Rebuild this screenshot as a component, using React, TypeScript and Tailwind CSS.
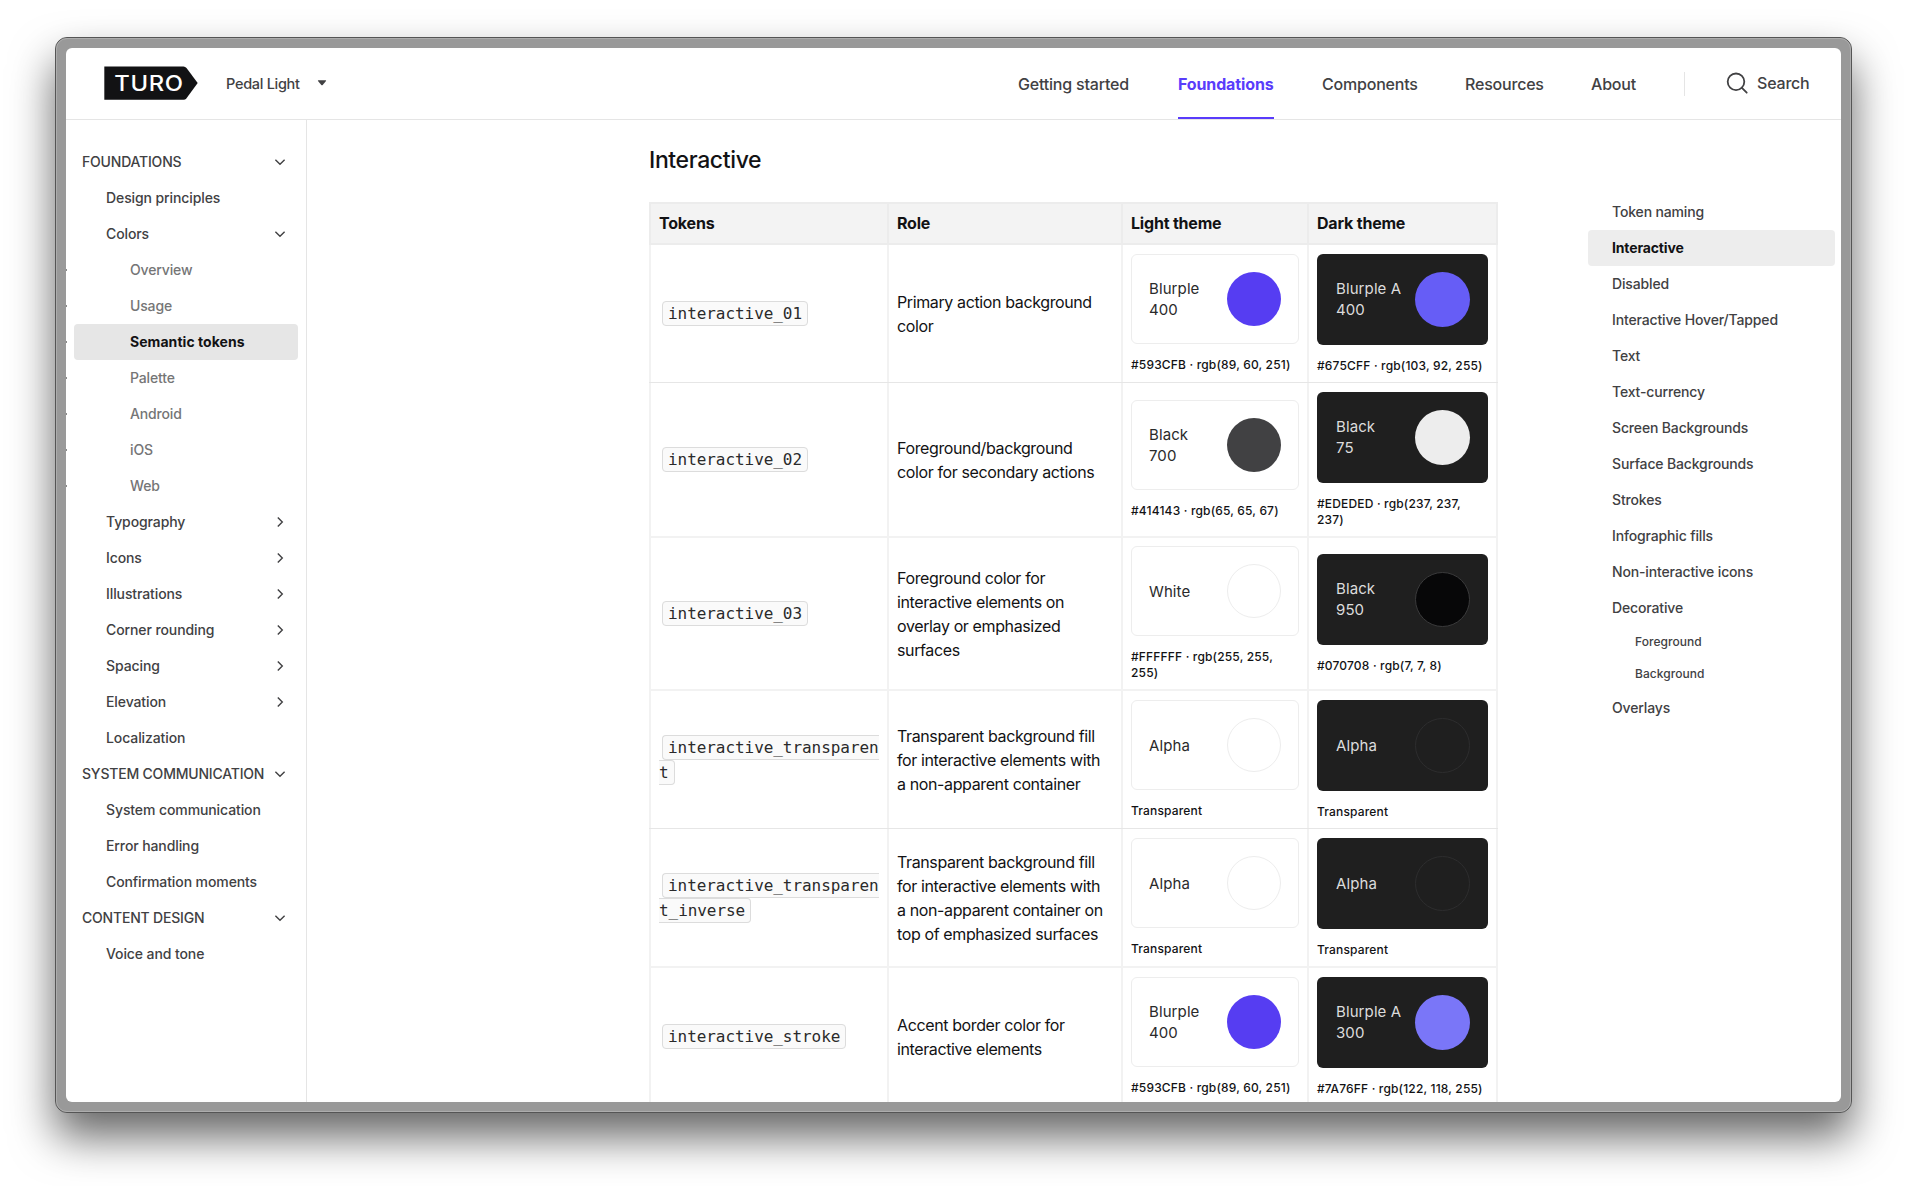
import clsx from "clsx";
import React from "react";

type NavEntry = {
  label: string;
  level: 0 | 1 | 2;
  chevron?: "down" | "right";
  active?: boolean;
};

const sidebar: NavEntry[] = [
  { label: "FOUNDATIONS", level: 0, chevron: "down" },
  { label: "Design principles", level: 1 },
  { label: "Colors", level: 1, chevron: "down" },
  { label: "Overview", level: 2 },
  { label: "Usage", level: 2 },
  { label: "Semantic tokens", level: 2, active: true },
  { label: "Palette", level: 2 },
  { label: "Android", level: 2 },
  { label: "iOS", level: 2 },
  { label: "Web", level: 2 },
  { label: "Typography", level: 1, chevron: "right" },
  { label: "Icons", level: 1, chevron: "right" },
  { label: "Illustrations", level: 1, chevron: "right" },
  { label: "Corner rounding", level: 1, chevron: "right" },
  { label: "Spacing", level: 1, chevron: "right" },
  { label: "Elevation", level: 1, chevron: "right" },
  { label: "Localization", level: 1 },
  { label: "SYSTEM COMMUNICATION", level: 0, chevron: "down" },
  { label: "System communication", level: 1 },
  { label: "Error handling", level: 1 },
  { label: "Confirmation moments", level: 1 },
  { label: "CONTENT DESIGN", level: 0, chevron: "down" },
  { label: "Voice and tone", level: 1 },
];

const topNav = [
  { label: "Getting started", width: "w-[112px]" },
  { label: "Foundations", width: "w-[96px]", active: true },
  { label: "Components", width: "w-[95px]" },
  { label: "Resources", width: "w-[78px]" },
  { label: "About", width: "w-[45px]" },
];

const toc = [
  { label: "Token naming" },
  { label: "Interactive", active: true },
  { label: "Disabled" },
  { label: "Interactive Hover/Tapped" },
  { label: "Text" },
  { label: "Text-currency" },
  { label: "Screen Backgrounds" },
  { label: "Surface Backgrounds" },
  { label: "Strokes" },
  { label: "Infographic fills" },
  { label: "Non-interactive icons" },
  { label: "Decorative" },
  { label: "Foreground", nested: true },
  { label: "Background", nested: true },
  { label: "Overlays" },
];

type SwatchData = { name: string[]; circle: string; caption: string };

const rows: {
  token: string;
  role: string[];
  light: SwatchData;
  dark: SwatchData;
  size: string;
}[] = [
  {
    token: "interactive_01",
    role: ["Primary action background", "color"],
    light: { name: ["Blurple", "400"], circle: "bg-[#563df2]", caption: "#593CFB · rgb(89, 60, 251)" },
    dark: { name: ["Blurple A", "400"], circle: "bg-[#665df6]", caption: "#675CFF · rgb(103, 92, 255)" },
    size: "h-[138px] border-b border-[#e6e6e6]",
  },
  {
    token: "interactive_02",
    role: ["Foreground/background", "color for secondary actions"],
    light: { name: ["Black", "700"], circle: "bg-[#414143]", caption: "#414143 · rgb(65, 65, 67)" },
    dark: { name: ["Black", "75"], circle: "bg-[#ededed]", caption: "#EDEDED · rgb(237, 237, 237)" },
    size: "h-[155px] border-b-2 border-[#f2f2f2]",
  },
  {
    token: "interactive_03",
    role: ["Foreground color for", "interactive elements on", "overlay or emphasized", "surfaces"],
    light: { name: ["White"], circle: "bg-white border border-[#ededed]", caption: "#FFFFFF · rgb(255, 255, 255)" },
    dark: { name: ["Black", "950"], circle: "bg-[#070708] border border-[#3a3a3b]", caption: "#070708 · rgb(7, 7, 8)" },
    size: "h-[153px] border-b-2 border-[#f2f2f2]",
  },
  {
    token: "interactive_transparent",
    role: ["Transparent background fill", "for interactive elements with", "a non-apparent container"],
    light: { name: ["Alpha"], circle: "border border-[#ededed]", caption: "Transparent" },
    dark: { name: ["Alpha"], circle: "border border-[#2d2d2e]", caption: "Transparent" },
    size: "h-[138px] border-b border-[#e6e6e6]",
  },
  {
    token: "interactive_transparent_inverse",
    role: ["Transparent background fill", "for interactive elements with", "a non-apparent container on", "top of emphasized surfaces"],
    light: { name: ["Alpha"], circle: "border border-[#ededed]", caption: "Transparent" },
    dark: { name: ["Alpha"], circle: "border border-[#2d2d2e]", caption: "Transparent" },
    size: "h-[139px] border-b-2 border-[#f2f2f2]",
  },
  {
    token: "interactive_stroke",
    role: ["Accent border color for", "interactive elements"],
    light: { name: ["Blurple", "400"], circle: "bg-[#563df2]", caption: "#593CFB · rgb(89, 60, 251)" },
    dark: { name: ["Blurple A", "300"], circle: "bg-[#7a76f8]", caption: "#7A76FF · rgb(122, 118, 255)" },
    size: "h-[138px] border-b border-[#e6e6e6]",
  },
];

const gridCols = "grid grid-cols-[238px_234px_186px_191px]";

function Chevron({ dir }: { dir: "down" | "right" }) {
  return (
    <svg width="12" height="12" viewBox="0 0 12 12" fill="none" stroke="#414143" strokeWidth="1.4">
      {dir === "down" ? <path d="M1.4 3.7 6 8.2l4.6-4.5" /> : <path d="M3.8 1.4 8.3 6l-4.5 4.6" />}
    </svg>
  );
}

function Logo() {
  return (
    <svg width="94" height="34" viewBox="0 0 94 34" className="-mt-px">
      <path d="M.3.4H79.5q1.8 0 3 1.5L93.7 17 82.5 32.3q-1.2 1.5-3 1.5H.3z" fill="#121214" />
      <text
        x="10.2"
        y="24.7"
        fontFamily="Inter, sans-serif"
        fontSize="21"
        fontWeight="500"
        fill="#fff"
        letterSpacing="0.6"
        textLength="69.5"
        lengthAdjust="spacingAndGlyphs"
      >
        TURO
      </text>
    </svg>
  );
}

function Header() {
  return (
    <header className="flex h-[72px] shrink-0 items-center border-b border-[#e5e5e5] pl-[38px] text-[#414143]">
      <Logo />
      <div className="ml-7 w-[91px] whitespace-nowrap text-[14.5px] font-medium tracking-[-0.3px]">
        Pedal Light
      </div>
      <svg width="10" height="6" viewBox="0 0 10 6" className="-mt-px">
        <path d="M1.4.3h7.2q.8 0 .4.7L5.7 5q-.7.7-1.4 0L1 1Q.6.3 1.4.3z" fill="#414143" />
      </svg>

      <nav className="ml-[691px] flex h-full gap-12 text-base font-medium">
        {topNav.map((item) => (
          <a
            key={item.label}
            className={clsx(
              "flex h-full items-center whitespace-nowrap border-b-2 pt-0.5",
              item.width,
              item.active
                ? "border-[#593cfb] font-bold tracking-[-0.13px] text-[#593cfb]"
                : "border-transparent tracking-[-0.2px]"
            )}
          >
            {item.label}
          </a>
        ))}
      </nav>
      <div className="ml-12 h-6 w-px bg-[#e5e5e5]" />
      <svg width="22" height="22" viewBox="0 0 22 22" fill="none" stroke="#414143" strokeWidth="1.8" className="-mt-0.5 ml-[41px] shrink-0">
        <circle cx="10" cy="9.8" r="8.3" />
        <path d="m15.9 15.8 4.8 4.9" strokeLinecap="round" />
      </svg>
      <span className="-mt-0.5 ml-[9px] whitespace-nowrap text-base font-medium tracking-[-0.2px]">Search</span>
    </header>
  );
}

function Sidebar() {
  return (
    <aside className="w-[241px] shrink-0 border-r border-[#e5e5e5] pt-6">
      {sidebar.map((item) => (
        <div key={item.label} className="flex items-center">
          <span className={clsx("h-0.5 w-px", item.level === 2 && "bg-[#8a8a8a]")} />
          <div
            className={clsx(
              "ml-[7px] flex h-9 w-56 items-center justify-between whitespace-nowrap rounded-sm pr-3 text-sm",
              item.level === 0 && "pl-2 tracking-[-0.2px] text-[#414143]",
              item.level === 1 && "pl-8 tracking-[-0.1px] text-[#414143]",
              item.level === 2 && "pl-14",
              item.active
                ? "bg-[#e6e6e6] font-bold tracking-[0.05px] text-[#121214]"
                : "font-medium",
              item.level === 2 && !item.active && "tracking-[-0.15px] text-[#757576]"
            )}
          >
            {item.label}
            {item.chevron && <Chevron dir={item.chevron} />}
          </div>
        </div>
      ))}
    </aside>
  );
}

function Swatch({ data, dark }: { data: SwatchData; dark?: boolean }) {
  return (
    <div className={clsx("flex flex-col justify-center border-l-2 border-[#f2f2f2] pl-2", dark && "border-r-2")}>
      <div
        className={clsx(
          "flex items-center justify-between rounded-md",
          dark
            ? "h-[91px] w-[171px] bg-[#1f1f1f] pl-[19px] pr-[18px] text-[#dcdcdc]"
            : "h-[90px] w-[168px] border border-[#ededed] px-[17px] text-[#2a2a2b]"
        )}
      >
        <div className="whitespace-nowrap text-[15px] leading-[21px] tracking-[0.1px]">
          {data.name.map((line) => (
            <div key={line}>{line}</div>
          ))}
        </div>
        <div className={clsx("shrink-0 rounded-full", dark ? "size-[55px]" : "size-[54px]", data.circle)} />
      </div>
      <div className="mt-[13px] w-[167px] text-xs font-medium leading-4 tracking-[0.17px] text-[#121214]">
        {data.caption}
      </div>
    </div>
  );
}

function TokenTable() {
  return (
    <div className="w-[849px] text-base text-[#121214]">
      <div className={clsx(gridCols, "h-[43px] border-y-2 border-[#ececec] bg-[#f3f3f3] font-bold tracking-[-0.2px]")}>
        {["Tokens", "Role", "Light theme", "Dark theme"].map((title) => (
          <div key={title} className="flex items-center border-l-2 border-[#ececec] pb-px pl-2 last:border-r-2">
            {title}
          </div>
        ))}
      </div>
      {rows.map((row) => (
        <div key={row.token} className={clsx(gridCols, row.size)}>
          <div className="flex items-center border-l-2 border-[#f2f2f2] pl-2">
            <div className="w-[221px] break-all leading-6">
              <code className="mx-[3px] rounded border border-[#dcdcdc] bg-[#fafafa] px-[5px] py-[2px] font-['DejaVu_Sans_Mono',monospace] text-base tracking-[-0.06px] text-[#2a2a2b]">
                {row.token}
              </code>
            </div>
          </div>
          <div className="flex flex-col justify-center whitespace-nowrap border-l-2 border-[#f2f2f2] pl-2 leading-6 tracking-[-0.38px]">
            {row.role.map((line) => (
              <div key={line}>{line}</div>
            ))}
          </div>
          <Swatch data={row.light} />
          <Swatch data={row.dark} dark />
        </div>
      ))}
    </div>
  );
}

function Toc() {
  return (
    <aside className="ml-[90px] w-[247px] pt-[74px] text-[#414143]">
      {toc.map((item) => (
        <div
          key={item.label}
          className={clsx(
            "flex items-center whitespace-nowrap rounded-sm",
            item.nested ? "h-8 pl-[47px] text-xs tracking-[0.05px]" : "h-9 pl-6 text-sm tracking-[-0.15px]",
            item.active ? "bg-[#ededed] font-bold text-[#121214]" : "font-medium"
          )}
        >
          {item.label}
        </div>
      ))}
    </aside>
  );
}

export default function App() {
  return (
    <div className="h-[1186px] w-[1907px] overflow-hidden bg-white pl-[55px] pt-[37px] font-['Inter',sans-serif]">
      <div className="h-[1076px] w-[1797px] rounded-[12px] border border-[#555] bg-[#999] shadow-[0_24px_44px_rgba(0,0,0,0.6)]">
        <div className="h-full rounded-[11px] border border-[#adadad] p-[9px]">
          <div className="flex h-[1054px] w-[1775px] flex-col overflow-hidden rounded-md bg-white">
            <Header />
            <div className="flex flex-1 overflow-hidden">
              <Sidebar />
              <main className="ml-[342px] pt-6">
                <h1 className="mb-[26px] text-[23px] font-medium leading-8 tracking-[-0.37px] text-[#121214]">
                  Interactive
                </h1>
                <TokenTable />
              </main>
              <Toc />
            </div>
          </div>
        </div>
      </div>
    </div>
  );
}
